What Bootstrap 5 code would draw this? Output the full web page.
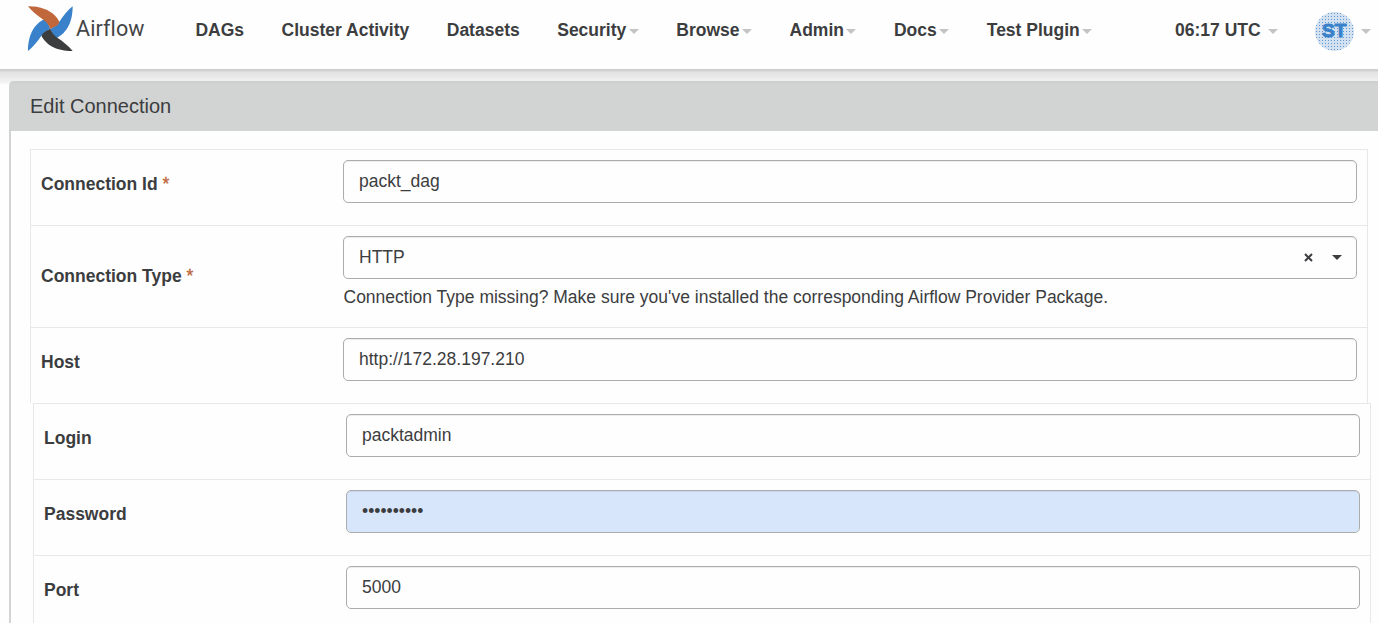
<!DOCTYPE html>
<html lang="en">
<head>
<meta charset="utf-8">
<title>Edit Connection - Airflow</title>
<link rel="stylesheet" href="https://cdn.jsdelivr.net/npm/bootstrap@5.3.0/dist/css/bootstrap.min.css">
<style>
body{font-family:"Liberation Sans",Arial,sans-serif;font-size:17.5px;line-height:25px;color:#3c3d3f;background:#fefefe;height:623px;overflow:hidden}
.topbar{height:69px;padding:0;position:relative;z-index:2;background:#fefefe}
.topbar::after{content:"";position:absolute;left:0;right:0;top:69px;height:25px;pointer-events:none;background:linear-gradient(#cacbcb 0,#d2d3d3 2px,#e2e3e2 3px,#e7e8e7 8px,rgba(215,216,216,.35) 11px,rgba(190,191,191,.25) 12px,rgba(200,201,201,0) 16px)}
.topbar .navbar-brand{margin:0 0 0 27px;padding:0;width:168.4px;height:58px}
.topbar .navbar-brand svg{margin-top:5px}
.brand-text{font-family:Roboto,sans-serif;font-size:21.5px;line-height:58px;color:#444546;letter-spacing:.1px;margin-left:2px}
.menu{gap:37.5px;height:60px}
.topbar .nav-link{padding:0!important;color:#3c3d3f;font-weight:700;line-height:60px}
.drop::after{content:"";display:inline-block;margin-left:2.5px;vertical-align:2px;border:5px solid transparent;border-top-color:#c4c4c4;border-bottom:0}
.clock{margin-left:82.8px}
.clock.drop::after{margin-left:7px}
.user{height:60px}
.avatar{width:39px;height:39px;border-radius:50%;background:#d3e0ef radial-gradient(circle,#5c99d6 .8px,transparent 1px) 0 0/3px 3px;color:#3982cb;font-size:19px;font-weight:700;margin-left:37px;margin-top:2px;-webkit-text-stroke:1px #3982cb}
.user.drop::after{margin-left:7px;margin-top:2px}
.panel-box{margin:12px 0 0 9px;height:560px;border-left:2px solid #d2d4d4;border-top-left-radius:5px}
.panel-title{height:50px;background:#d2d4d4;margin-left:-2px;padding-left:21px;font-size:20px;line-height:50px;border-top-left-radius:5px}
.fields{margin:18px 0 0 19px;width:1338px}
.field{height:76px;border:1px solid #e7e8e7;border-bottom:0;padding:10px 10px 0}
.field.tall{height:102px}
.lower{margin-left:3px;width:1338px}
.field-name{width:302px;font-weight:700;padding-top:12px;flex:none}
.tall .field-name{padding-top:28px}
.req{color:#c0673c;font-weight:400;-webkit-text-stroke:.4px #c0673c}
.form-control.entry{height:43px;padding:0 15px;font-size:17.5px;line-height:41px;color:#3c3d3f;background-color:#fefefe;border:1px solid #acacab;border-radius:5px;box-shadow:inset 0 1px 1px rgba(0,0,0,.075)}
.form-control.filled{background-color:#d8e6fc}
.clear-mark{margin-bottom:1px}
.down{border:5px solid transparent;border-top-color:#3c3d3f;border-bottom:0;margin:0 -1px 0 19px}
.hint{margin:6px 0 0 .5px}
</style>
<script src="https://cdn.jsdelivr.net/npm/bootstrap@5.3.0/dist/js/bootstrap.bundle.min.js"></script>
</head>
<body>
<nav class="navbar navbar-expand topbar align-items-start flex-nowrap">
  <a class="navbar-brand d-flex align-items-start" href="#">
    <svg width="47" height="47" viewBox="81 14 141 141">
      <defs><path id="petal" d="M218 18C218 50 210 92 172 112C162 111 157 100 151 85C164 79 172 74 178 64C190 46 204 29 218 18Z"/></defs>
      <use href="#petal" fill="#3982cb"/>
      <use href="#petal" fill="#3c3d3f" transform="rotate(90 151 85)"/>
      <use href="#petal" fill="#3982cb" transform="rotate(180 151 85)"/>
      <use href="#petal" fill="#c0673c" transform="rotate(270 151 85)"/>
    </svg>
    <span class="brand-text">Airflow</span>
  </a>
  <div class="navbar-nav menu">
    <a class="nav-link" href="#">DAGs</a>
    <a class="nav-link" href="#">Cluster Activity</a>
    <a class="nav-link" href="#">Datasets</a>
    <a class="nav-link drop" href="#">Security</a>
    <a class="nav-link drop" href="#">Browse</a>
    <a class="nav-link drop" href="#">Admin</a>
    <a class="nav-link drop" href="#">Docs</a>
    <a class="nav-link drop" href="#">Test Plugin</a>
  </div>
  <div class="navbar-nav">
    <a class="nav-link drop clock" href="#">06:17 UTC</a>
    <a class="nav-link drop user d-flex align-items-center" href="#"><span class="avatar d-flex align-items-center justify-content-center">ST</span></a>
  </div>
</nav>
<main class="panel-box">
  <div class="panel-title">Edit Connection</div>
  <form class="fields">
    <div class="field d-flex"><div class="field-name">Connection Id <span class="req">*</span></div><div class="form-control entry">packt_dag</div></div>
    <div class="field tall d-flex"><div class="field-name">Connection Type <span class="req">*</span></div>
      <div class="flex-grow-1">
        <div class="form-control entry d-flex align-items-center"><span class="me-auto">HTTP</span>
          <svg class="clear-mark" width="9" height="9" viewBox="0 0 9 9"><path d="M1 1L8 8M8 1L1 8" stroke="#3c3d3f" stroke-width="2"/></svg>
          <span class="down"></span></div>
        <div class="hint">Connection Type missing? Make sure you've installed the corresponding Airflow Provider Package.</div>
      </div>
    </div>
    <div class="field d-flex"><div class="field-name">Host</div><div class="form-control entry">http://172.28.197.210</div></div>
    <div class="lower">
      <div class="field d-flex"><div class="field-name">Login</div><div class="form-control entry">packtadmin</div></div>
      <div class="field d-flex"><div class="field-name">Password</div><div class="form-control entry filled">••••••••••</div></div>
      <div class="field d-flex"><div class="field-name">Port</div><div class="form-control entry">5000</div></div>
    </div>
  </form>
</main>
</body>
</html>
